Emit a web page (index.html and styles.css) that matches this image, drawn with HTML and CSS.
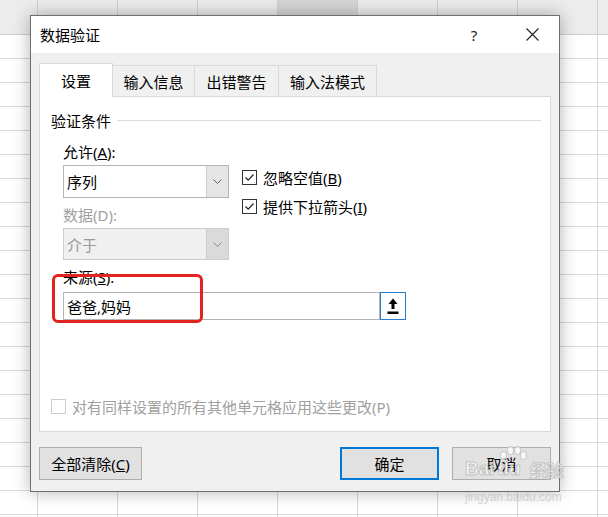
FILE: index.html
```html
<!DOCTYPE html>
<html lang="zh-CN">
<head>
    <meta charset="UTF-8">
    <meta name="viewport" content="width=device-width, initial-scale=1.0">
    <title>数据验证</title>
    <link rel="stylesheet" href="styles.css">
</head>
<body>
    <!-- Sheet column header -->
    <div class="sheet-head">
        <div class="col first"></div>
        <div class="col"></div>
        <div class="col"></div>
        <div class="col"></div>
        <div class="col selected"></div>
        <div class="col"></div>
        <div class="col"></div>
        <div class="col"></div>
        <div class="col last"></div>
    </div>

    <!-- Data validation dialog -->
    <div class="dialog">
        <div class="title-bar">
            <span class="title">数据验证</span>
            <span class="help">?</span>
            <span class="close">
                <svg width="13" height="13" viewBox="0 0 13 13"><path d="M0.5 0.5 L12.5 12.5 M12.5 0.5 L0.5 12.5" stroke="#222" stroke-width="1.1" fill="none"/></svg>
            </span>
        </div>
        <div class="dialog-body">
            <div class="tabs">
                <div class="tab active" style="width: 74px;">设置</div>
                <div class="tab" style="width: 83px;">输入信息</div>
                <div class="tab" style="width: 85px;">出错警告</div>
                <div class="tab" style="width: 99px;">输入法模式</div>
            </div>
            <div class="panel">
                <div class="group-head">
                    <span>验证条件</span>
                    <span class="group-line"></span>
                </div>
                <div class="form">
                    <div class="rule">
                        <div class="rule-left">
                            <div class="label">允许(<u>A</u>):</div>
                            <div class="select">
                                <span class="select-text">序列</span>
                                <span class="select-btn">
                                    <svg width="9" height="5" viewBox="0 0 9 5"><path d="M0.5 0.5 L4.5 4.5 L8.5 0.5" stroke="#606060" fill="none"/></svg>
                                </span>
                            </div>
                            <div class="label disabled">数据(D):</div>
                            <div class="select disabled">
                                <span class="select-text">介于</span>
                                <span class="select-btn">
                                    <svg width="9" height="5" viewBox="0 0 9 5"><path d="M0.5 0.5 L4.5 4.5 L8.5 0.5" stroke="#8a8a8a" fill="none"/></svg>
                                </span>
                            </div>
                        </div>
                        <div class="rule-right">
                            <label class="check">
                                <span class="box"><svg width="11" height="11" viewBox="0 0 11 11"><path d="M1.5 5.5 L4.2 8.2 L9.5 2.5" stroke="#222" stroke-width="1.2" fill="none"/></svg></span>
                                <span>忽略空值(<u>B</u>)</span>
                            </label>
                            <label class="check">
                                <span class="box"><svg width="11" height="11" viewBox="0 0 11 11"><path d="M1.5 5.5 L4.2 8.2 L9.5 2.5" stroke="#222" stroke-width="1.2" fill="none"/></svg></span>
                                <span>提供下拉箭头(<u>I</u>)</span>
                            </label>
                        </div>
                    </div>
                    <div class="label source-label">来源(<u>S</u>):</div>
                    <div class="source-row">
                        <div class="source-input">爸爸,妈妈</div>
                        <div class="pick-btn">
                            <svg width="12" height="17" viewBox="0 0 12 17"><path d="M6 0.5 L10.5 6 L7.5 6 L7.5 11 L4.5 11 L4.5 6 L1.5 6 Z" fill="#000"/><rect x="0.5" y="13.5" width="11" height="2.5" fill="#000"/></svg>
                        </div>
                    </div>
                </div>
                <label class="check apply disabled">
                    <span class="box"></span>
                    <span>对有同样设置的所有其他单元格应用这些更改(P)</span>
                </label>
                <div class="highlight"></div>
            </div>
            <div class="footer">
                <button type="button" class="btn">全部清除(<u>C</u>)</button>
                <div class="footer-right">
                    <button type="button" class="btn primary">确定</button>
                    <button type="button" class="btn">取消</button>
                </div>
            </div>
        </div>
    </div>

    <!-- Watermark -->
    <div class="watermark">
        <div class="wm-logo">
            <span>Bai</span>
            <span class="wm-du">du<span class="paw"><i></i><i></i><i></i><i></i></span></span>
            <span class="wm-cn">经验</span>
        </div>
        <div class="wm-url">jingyan.baidu.com</div>
    </div>
</body>
</html>
```

FILE: styles.css
```css
body {
    margin: 0;
    width: 608px;
    height: 517px;
    overflow: hidden;
    position: relative;
    font-family: 'Noto Sans', 'Noto Sans CJK SC', sans-serif;
    font-size: 15px;
    color: #000;
    background-color: #fff;
    background-image:
        linear-gradient(to right, #d9d9d9 1px, transparent 1px),
        linear-gradient(to bottom, #d9d9d9 1px, transparent 1px);
    background-size: 80px 24px;
    background-position: 37px 34px;
}
.sheet-head {
    display: flex;
    height: 35px;
    box-sizing: border-box;
    overflow: hidden;
    background: #ececec;
    border-bottom: 1px solid #cfcfcf;
}
.sheet-head .col {
    box-sizing: border-box;
    width: 80px;
    flex-shrink: 0;
    border-right: 1px solid #d0d0d0;
}
.sheet-head .col.first {
    width: 38px;
}
.sheet-head .col.last {
    width: 10px;
    border-right: none;
}
.sheet-head .col.selected {
    background: #d6d6d6;
}
/* Dialog window */
.dialog {
    position: absolute;
    left: 30px;
    top: 15px;
    width: 530px;
    height: 477px;
    box-sizing: border-box;
    border: 1px solid #6e6e6e;
    background: #f0f0f0;
    box-shadow: 0 0 16px rgba(0, 0, 0, 0.3);
    display: flex;
    flex-direction: column;
}
.title-bar {
    height: 37px;
    background: #fff;
    display: flex;
    align-items: center;
    padding: 0 4px 0 9px;
}
.title {
    flex: 1;
}
.help {
    width: 46px;
    text-align: center;
    color: #222;
}
.close {
    width: 46px;
    margin-left: 12px;
    display: flex;
    justify-content: center;
}
.dialog-body {
    padding: 10px 8px 0 8px;
}
.tabs {
    display: flex;
    align-items: flex-end;
    height: 33px;
}
.tab {
    box-sizing: border-box;
    height: 31px;
    margin-left: -1px;
    border: 1px solid #d9d9d9;
    border-bottom: none;
    background: #f0f0f0;
    display: flex;
    align-items: center;
    justify-content: center;
}
.tab.active {
    margin-left: 0;
    height: 34px;
    margin-bottom: -1px;
    background: #fff;
    position: relative;
    z-index: 1;
}
.panel {
    position: relative;
    height: 336px;
    box-sizing: border-box;
    border: 1px solid #d9d9d9;
    background: #fff;
    padding: 14px 9px 16px 11px;
    display: flex;
    flex-direction: column;
}
.group-head {
    display: flex;
    align-items: center;
    height: 18px;
}
.group-line {
    flex: 1;
    height: 1px;
    background: #dcdcdc;
    margin: 0 0 0 6px;
}
.form {
    margin: 13px 0 0 12px;
}
.rule {
    display: flex;
}
.rule-left {
    width: 166px;
}
.rule-right {
    margin-left: 13px;
    padding-top: 25px;
    display: flex;
    flex-direction: column;
    gap: 8px;
}
.label {
    height: 20px;
    line-height: 20px;
}
.label.disabled {
    margin-top: 7px;
    color: #a0a0a0;
}
.select {
    margin-top: 3px;
    height: 33px;
    box-sizing: border-box;
    border: 1px solid #b4b4b4;
    display: flex;
}
.select-text {
    flex: 1;
    padding-left: 3px;
    display: flex;
    align-items: center;
}
.select-btn {
    width: 21px;
    background: #e5e5e5;
    border-left: 1px solid #cfcfcf;
    display: flex;
    align-items: center;
    justify-content: center;
}
.select.disabled {
    height: 32px;
    border-color: #cccccc;
    background: #f0f0f0;
    color: #9a9a9a;
}
.select.disabled .select-btn {
    background: #dadada;
    border-left-color: #cccccc;
}
.check {
    display: flex;
    align-items: center;
    height: 21px;
    gap: 6px;
}
.box {
    width: 13px;
    height: 13px;
    border: 1px solid #333;
    background: #fff;
    display: flex;
    align-items: center;
    justify-content: center;
}
.source-label {
    margin-top: 7px;
}
.source-row {
    display: flex;
    margin-top: 5px;
    height: 28px;
}
.source-input {
    width: 317px;
    box-sizing: border-box;
    border: 1px solid #b4b4b4;
    padding-left: 3px;
    display: flex;
    align-items: center;
}
.pick-btn {
    width: 26px;
    box-sizing: border-box;
    border: 1px solid #2a7ad0;
    background: #fff;
    display: flex;
    align-items: center;
    justify-content: center;
}
.apply {
    margin-top: auto;
    height: 18px;
}
.apply.disabled {
    color: #a0a0a0;
}
.apply.disabled .box {
    border-color: #cccccc;
}
.highlight {
    position: absolute;
    left: 12px;
    top: 177px;
    width: 151px;
    height: 49px;
    box-sizing: border-box;
    border: 3px solid #e3231f;
    border-radius: 6px;
}
.footer {
    display: flex;
    justify-content: space-between;
    margin-top: 15px;
}
.footer-right {
    display: flex;
    gap: 13px;
}
.btn {
    height: 33px;
    width: 99px;
    box-sizing: border-box;
    border: 1px solid #adadad;
    background: #e1e1e1;
    font-family: inherit;
    font-size: 15px;
    color: #000;
    padding: 0;
}
.footer > .btn {
    width: 103px;
}
.btn.primary {
    border: 2px solid #0078d7;
}
/* Watermark overlay */
.watermark {
    position: absolute;
    left: 465px;
    top: 458px;
    pointer-events: none;
}
.wm-logo {
    display: flex;
    align-items: center;
    height: 22px;
    gap: 3px;
    font-family: 'Liberation Sans', sans-serif;
    font-size: 19px;
    font-weight: bold;
    color: rgba(255, 255, 255, 0.75);
    -webkit-text-stroke: 1px rgba(160, 160, 160, 0.55);
}
.wm-du {
    position: relative;
}
.paw {
    position: absolute;
    left: 2px;
    top: -12px;
    width: 26px;
    height: 12px;
}
.paw i {
    position: absolute;
    width: 5px;
    height: 7px;
    border-radius: 50%;
    border: 1px solid rgba(160, 160, 160, 0.55);
    background: rgba(255, 255, 255, 0.75);
}
.paw i:nth-child(1) { left: 0; top: 5px; }
.paw i:nth-child(2) { left: 7px; top: 0; }
.paw i:nth-child(3) { left: 14px; top: 0; }
.paw i:nth-child(4) { left: 20px; top: 5px; }
.wm-cn {
    margin-left: 6px;
    font-family: 'Noto Sans CJK SC', sans-serif;
    font-size: 17px;
}
.wm-url {
    margin-top: 11px;
    font-family: 'Liberation Sans', sans-serif;
    font-size: 12px;
    line-height: 12px;
    color: rgba(190, 190, 190, 0.7);
}
```
